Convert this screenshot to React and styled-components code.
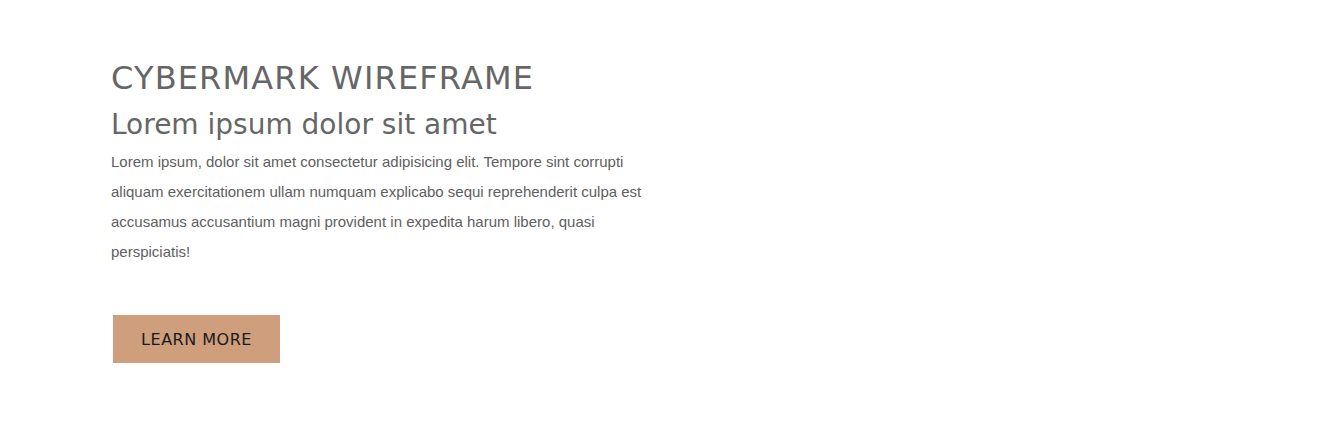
import React from 'react';
import styled, { createGlobalStyle } from 'styled-components';

const GlobalStyle = createGlobalStyle`
  html, body {
    margin: 0;
    padding: 0;
    background: #fff;
  }
`;

const Hero = styled.section`
  width: 1330px;
  height: 429px;
  box-sizing: border-box;
  padding: 57px 0 0 111px;
  display: flex;
  flex-direction: column;
  align-items: flex-start;
`;

const Title = styled.h1`
  margin: 0;
  font-family: 'DejaVu Sans', sans-serif;
  font-weight: 400;
  font-size: 32px;
  line-height: 42px;
  letter-spacing: 1.15px;
  color: #666;
`;

const Subtitle = styled.h2`
  margin: 6px 0 0;
  font-family: 'DejaVu Sans', sans-serif;
  font-weight: 400;
  font-size: 28px;
  line-height: 40px;
  color: #666;
`;

const Text = styled.p`
  margin: 2px 0 0;
  width: 550px;
  font-family: 'Liberation Sans', Arial, sans-serif;
  font-size: 15px;
  line-height: 30px;
  color: #606060;
`;

const Button = styled.button`
  margin: 48px 0 0 2px;
  width: 167px;
  height: 48px;
  border: none;
  background: #cf9e7d;
  font-family: 'DejaVu Sans', sans-serif;
  font-size: 16px;
  letter-spacing: 0.5px;
  color: #1a1a1a;
  cursor: pointer;
`;

export default function App() {
  return (
    <>
      <GlobalStyle />
      <Hero>
        <Title>CYBERMARK WIREFRAME</Title>
        <Subtitle>Lorem ipsum dolor sit amet</Subtitle>
        <Text>
          Lorem ipsum, dolor sit amet consectetur adipisicing elit. Tempore sint corrupti
          aliquam exercitationem ullam numquam explicabo sequi reprehenderit culpa est
          accusamus accusantium magni provident in expedita harum libero, quasi
          perspiciatis!
        </Text>
        <Button>LEARN MORE</Button>
      </Hero>
    </>
  );
}
